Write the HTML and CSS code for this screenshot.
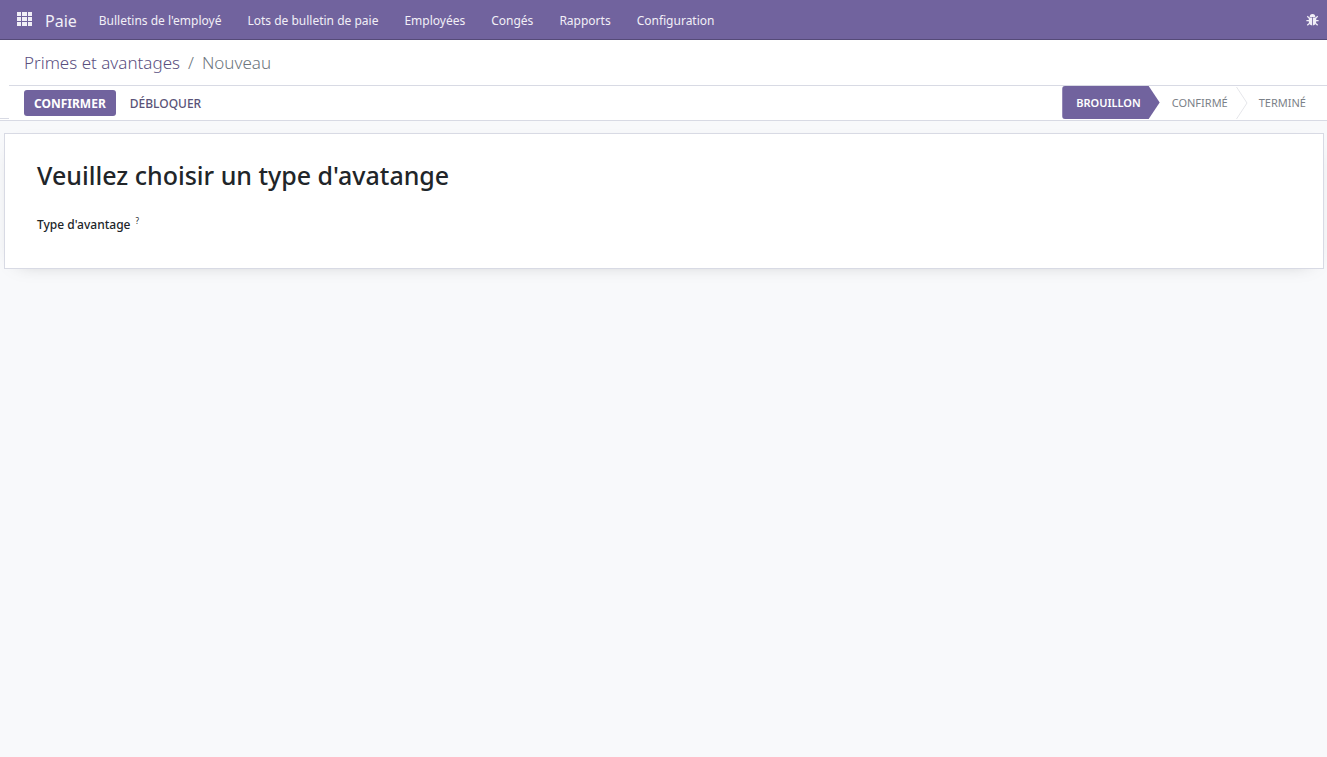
FILE: index.html
```html
<!DOCTYPE html>
<html lang="fr">
<head>
<meta charset="utf-8">
<meta name="viewport" content="width=device-width, initial-scale=1">
<title>Primes et avantages</title>
<link rel="stylesheet" href="styles.css">
</head>
<body>
<header class="navbar">
  <button class="apps" type="button" aria-label="Applications">
    <svg width="15" height="14" viewBox="0 0 15 14" fill="currentColor" aria-hidden="true">
      <path d="M0 0h4v4H0zM5 0h5v4H5zM11 0h4v4h-4zM0 5h4v4H0zM5 5h5v4H5zM11 5h4v4h-4zM0 10h4v4H0zM5 10h5v4H5zM11 10h4v4h-4z"/>
    </svg>
  </button>
  <a class="brand" href="#">Paie</a>
  <nav class="menu">
    <a href="#">Bulletins de l'employé</a>
    <a href="#">Lots de bulletin de paie</a>
    <a href="#">Employées</a>
    <a href="#">Congés</a>
    <a href="#">Rapports</a>
    <a href="#">Configuration</a>
  </nav>
  <button class="debug" type="button" aria-label="Débogage">
    <svg width="13" height="12" viewBox="0 0 13 12" aria-hidden="true">
      <path d="M3.700 3a2.800 3 0 0 1 5.600 0z" fill="currentColor"/>
      <path d="M2.800 3.500h3.300v8C4 11.300 2.800 9.700 2.800 8zM6.900 3.500h3.300V8c0 1.700-1.200 3.300-3.300 3.500z" fill="currentColor"/>
      <path d="M1.300 2.300 3.500 4.400M11.700 2.300 9.500 4.400M.4 6.700H3M10 6.700h2.600M1.300 11.300 3.600 9.200M11.700 11.300 9.400 9.200" stroke="currentColor" stroke-width="1.300" fill="none"/>
    </svg>
  </button>
</header>
<div class="breadcrumb">
  <a href="#">Primes et avantages</a><span class="slash">/</span><span>Nouveau</span>
</div>
<div class="statusbar">
  <div class="gutter"></div>
  <div class="status-row">
    <div class="actions">
      <button class="btn primary" type="button">CONFIRMER</button>
      <button class="btn" type="button">DÉBLOQUER</button>
    </div>
    <div class="steps">
      <button class="step current" type="button" aria-current="step">BROUILLON</button>
      <button class="step" type="button">CONFIRMÉ</button>
      <svg class="chevron" width="12" height="32" viewBox="0 0 12 32" aria-hidden="true"><path d="M.5 0 11 16 .5 32" fill="none" stroke="currentColor"/></svg>
      <button class="step" type="button">TERMINÉ</button>
    </div>
  </div>
</div>
<main class="content">
  <section class="sheet">
    <h1>Veuillez choisir un type d'avatange</h1>
    <div class="field">Type d'avantage<sup>?</sup></div>
  </section>
</main>
</body>
</html>
```
FILE: styles.css
```css
* { box-sizing: border-box; }
body {
  margin: 0;
  min-height: 100vh;
  background: #f8f9fb;
  color: #212529;
  font-family: "Noto Sans", "Open Sans", sans-serif;
  font-size: 12px;
  line-height: 18px;
}
a { color: inherit; text-decoration: none; }
button { font: inherit; color: inherit; background: none; border: 0; padding: 0; cursor: pointer; }
svg { display: block; }
.navbar {
  display: flex;
  align-items: center;
  height: 40px;
  padding: 0 8px 0 17px;
  background: #71639e;
  border-bottom: 1px solid #554a78;
  color: #f1eff7;
}
.apps { padding-bottom: 2px; }
.brand { margin: 0 22px 0 13px; padding-top: 2px; font-size: 16px; line-height: 24px; }
.menu { display: flex; gap: 26px; padding-top: 2px; white-space: nowrap; }
.debug { margin-left: auto; }
.breadcrumb {
  display: flex;
  align-items: center;
  height: 45px;
  padding: 0 24px;
  background: #fff;
  color: #6c757d;
  font-size: 17px;
  line-height: 24px;
  font-weight: 300;
}
.breadcrumb a { color: #5a4f7f; }
.slash { margin: 0 8px; }
.statusbar { display: flex; height: 36px; background: #fff; border-bottom: 1px solid #d8dae4; }
.gutter { width: 9px; height: 34px; border-bottom: 1px solid #d8dae4; }
.status-row {
  flex: 1;
  display: flex;
  justify-content: space-between;
  padding: 0 21px 0 15px;
  border-top: 1px solid #d8dae4;
}
.actions { display: flex; align-items: center; gap: 4px; }
.btn { height: 26px; padding: 1px 10px 0; border-radius: 3px; color: #5a5378; font-weight: 500; }
.btn.primary { background: #71639e; color: #fff; font-weight: 700; }
.steps { display: flex; height: 33px; align-items: center; }
.step { color: #7b8188; font-size: 11px; }
.step + .chevron { margin: 0 11px 0 8px; color: #e5e6ea; }
.step.current {
  height: 33px;
  margin-right: 12px;
  padding: 0 19px 0 14px;
  border-radius: 3px 0 0 3px;
  background: #71639e;
  color: #fff;
  font-weight: 600;
  clip-path: polygon(0 0, calc(100% - 11px) 0, 100% 50%, calc(100% - 11px) 100%, 0 100%);
}
.content { padding: 12px 3px 24px 4px; }
.sheet {
  min-height: 136px;
  padding: 24px 32px;
  border: 1px solid #d8dae4;
  background: #fff;
  box-shadow: 0 5px 20px -15px rgba(0, 0, 0, 0.4);
}
h1 { margin: 0 0 24px; font-size: 25px; line-height: 34px; font-weight: 500; }
.field { font-weight: 500; }
sup { margin-left: 5px; font-size: 8px; line-height: 0; font-weight: 400; }
```
